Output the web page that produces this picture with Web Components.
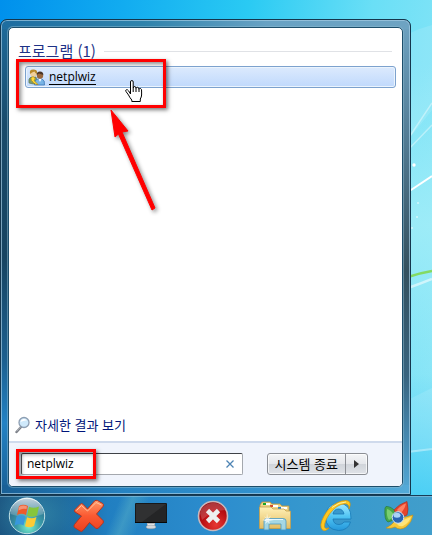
<!DOCTYPE html>
<html lang="ko">
<head>
<meta charset="utf-8">
<title>시작 메뉴</title>
<style>
html,body{height:100%;margin:0}
body{font-family:"Open Sans","Noto Sans CJK KR",sans-serif;font-size:13px;line-height:20px;color:#000;overflow:hidden}
</style>
</head>
<body>
<desktop-screen>
  <start-menu>
    <result-group label="프로그램 (1)">
      <result-item>netplwiz</result-item>
    </result-group>
    <more-results slot="more">자세한 결과 보기</more-results>
    <search-box slot="footer" value="netplwiz"></search-box>
    <shutdown-button slot="footer">시스템 종료</shutdown-button>
  </start-menu>
  <task-bar slot="bar"></task-bar>
</desktop-screen>
<script>
const define = (name, html, setup) => {
  const t = document.createElement('template');
  t.innerHTML = '<style>*{box-sizing:border-box}button{font:inherit;color:inherit;margin:0;padding:0;border:0;background:none}svg{display:block}</style>' + html;
  customElements.define(name, class extends HTMLElement {
    constructor() {
      super();
      this.attachShadow({mode: 'open'}).append(t.content.cloneNode(true));
    }
    connectedCallback() { if (setup) setup(this, this.shadowRoot); }
  });
};

define('desktop-screen', `
<style>
:host{display:flex;flex-direction:column;min-height:100vh;position:relative;
 background:
  radial-gradient(ellipse 420px 160px at 100% 42%,#a4eef8cc,#a4eef800),
  linear-gradient(180deg,#fff0 70%,#2cc4f4aa 93%),
  linear-gradient(97deg,#0090ec 0%,#12acf0 25%,#2acaf3 50%,#6adff6 75%,#8ee6f7 100%)}
.sky{position:absolute;top:0;right:0}
main{flex:1;display:flex;padding:19px 21px 0 0;position:relative}
::slotted(start-menu){flex:1;min-width:0}
</style>
<svg class="sky" width="32" height="495" viewBox="400 0 32 495" fill="none" aria-hidden="true">
 <path d="M408 34Q420 28 432 25V110L408 140Z" fill="#fff" opacity=".12"/>
 <path d="M410 136L432 103M408 150L432 125" stroke="#fff" stroke-width="1.500" opacity=".4"/>
 <path d="M408 192L432 176" stroke="#fff" stroke-width="2"/>
 <path d="M408 277Q420 273 432 271" stroke="#84da62" stroke-width="2.500"/>
 <path d="M408 288Q420 284 432 279" stroke="#fff" stroke-width="2.500" opacity=".55"/>
 <path d="M408 400L432 388V448L408 452Z" fill="#fff" opacity=".12"/>
 <path d="M408 452L432 449" stroke="#fff" stroke-width="2" opacity=".4"/>
 <g fill="#fff"><circle cx="414" cy="165" r="1.700"/><circle cx="418" cy="203" r=".8"/><circle cx="417" cy="217" r=".8"/><circle cx="412" cy="228" r=".8"/></g>
</svg>
<main><slot></slot></main>
<slot name="bar"></slot>`);

define('start-menu', `
<style>
:host{display:flex;position:relative;border:1px solid #14364d;border-radius:7px 7px 0 0;padding:7px;
 box-shadow:inset 0 0 0 1px #a5cde4b0;
 background:
  linear-gradient(90deg,#1e6da0,#2f83ac 35%,#68a2c4 65%,#6ea3c2) top/100% 9px no-repeat,
  linear-gradient(90deg,#195f95,#2683c2 30%,#3494d0 70%,#54aad8) bottom/100% 9px no-repeat,
  linear-gradient(180deg,#1f6c9c,#1a4b6b 22%,#174461 50%,#1c6090 72%,#2382c4 85%,#195f95) left/9px 100% no-repeat,
  linear-gradient(180deg,#6ea3c2,#537c94 25%,#34515f 53%,#38647f 75%,#4689b0 88%,#54aad8) right/9px 100% no-repeat,#2f6f96}
.pane{flex:1;min-width:0;display:flex;flex-direction:column;border:1px solid #1d4e6b;border-radius:5px;background:#fff;box-shadow:0 0 0 1px #8dbbd080;overflow:hidden}
.results{flex:1;padding:12px 6px 0 8px}
.more{padding:0 8px 6px 6px}
footer{display:flex;align-items:center;gap:24px;padding:10px 34px 11px 12px;border-top:2px solid #cfdaec;background:#f0f4fc}
::slotted(search-box){flex:1;min-width:0}
.arrow{position:absolute;left:105px;top:84px;filter:drop-shadow(2px 2px 2px #0007)}
</style>
<div class="pane">
 <div class="results"><slot></slot></div>
 <div class="more"><slot name="more"></slot></div>
 <footer><slot name="footer"></slot></footer>
</div>
<svg class="arrow" width="56" height="112" viewBox="106 104 56 112" aria-hidden="true">
 <path d="M111 110L128 131L122 132L155 208L152 210L118.500 134L115 137Z" fill="#f00" stroke="#f00" stroke-linejoin="round"/>
</svg>`);

define('callout-frame', `
<style>
:host{display:block;position:absolute;box-sizing:border-box;border:3px solid #f00;pointer-events:none;box-shadow:2px 2px 4px #0008,inset 2px 2px 4px #0007}
</style>`);

define('result-group', `
<style>
:host{display:block}
h2{display:flex;align-items:center;gap:8px;margin:0 4px 4px 1px;font-weight:400;font-size:15px;line-height:22px;color:#1e3287;font-family:"Noto Sans CJK KR",sans-serif}
h2::after{content:"";flex:1;border-top:1px solid #e0e2e6}
.items{padding-left:8px}
</style>
<h2><span></span></h2><div class="items"><slot></slot></div>`,
(el, r) => r.querySelector('span').textContent = el.getAttribute('label'));

define('result-item', `
<style>
:host{display:block;position:relative}
a{display:flex;align-items:center;gap:4px;height:22px;padding:0 2px;border:1px solid #7da2ce;border-radius:3px;background:linear-gradient(#dceafd,#c0d9fc);box-shadow:inset 0 0 0 1px #ebf4fd;color:#000;text-decoration:none;font-size:12px;line-height:16px}
span{border-bottom:1px solid #000;line-height:14px}
callout-frame{left:-9px;top:-7px;width:150px;height:49px}
.hand{position:absolute;left:100px;top:14px}
</style>
<a href="#netplwiz">
<svg width="17" height="17" viewBox="0 0 17 17" aria-hidden="true">
 <path d="M1 14Q0 9 3 8H8L10 14Q5 16 1 14Z" fill="#7d9c6c" stroke="#59705a" stroke-width=".6"/>
 <circle cx="5.500" cy="4.500" r="3.300" fill="#efd09c"/><path d="M2 5Q1 0 6 .6Q10 1 9 5Q7 4 6.500 2.500Q4 3 2 5Z" fill="#b98a2c"/>
 <path d="M6.500 16Q6 11 10 10H14Q17 11 16.500 16Z" fill="#78b4e6" stroke="#336fae" stroke-width=".7"/>
 <path d="M10.500 10L12 13L13.500 10Z" fill="#fff"/>
 <circle cx="12" cy="6.500" r="3.200" fill="#99683d"/><path d="M8.700 6Q8.500 2.500 12 2.500Q15.500 2.500 15.300 6Q13 5 11 4.500Z" fill="#4b3527"/>
 <path d="M3 9.500a2 2 0 1 1 3 2l4 4h-2l-1-1H6l-1.500-2Q3 12 3 9.500Z" fill="#ffdc3a" stroke="#a77a09" stroke-width=".6"/>
</svg><span><slot></slot></span></a>
<callout-frame></callout-frame>
<svg class="hand" width="18" height="23" viewBox="0 0 18 23" aria-hidden="true">
 <path d="M5.500 14V2Q5.500.5 6.800.5Q8.200.5 8.200 2V8Q8.500 6.300 9.800 6.500Q11 6.500 11 8.500Q11.500 7 12.700 7.300Q14 7.500 14 9.500Q14.500 8 15.500 8.500Q16.800 9 16.600 11V15Q16.500 17 15.300 19V21.500H6.800V20Q5 18 3.500 15L1 11.500Q.2 10.300 1.200 9.800Q2.500 9.200 3.700 11Z" fill="#fff" stroke="#000"/><path d="M8.200 8V12M11 8.500V12M14 9.500V12" stroke="#000"/>
</svg>`);

define('more-results', `
<style>
:host{display:block}
a{display:flex;align-items:center;gap:4px;color:#00157a;text-decoration:none;font-family:"Noto Sans CJK KR",sans-serif;font-size:13px;line-height:20px}
</style>
<a href="#more"><svg width="16" height="18" viewBox="0 0 16 18" aria-hidden="true">
 <path d="M6 11L1.500 16" stroke="#7b7f87" stroke-width="2.400" stroke-linecap="round"/><path d="M5.500 11L1.500 15.300" stroke="#c4c8ce" stroke-width=".8"/>
 <circle cx="9" cy="6.500" r="5" fill="#cfe9fb" stroke="#8d9eb2" stroke-width="1.300"/><path d="M5.500 6A3.600 3.600 0 0 1 12 4.500Q9 4 5.500 6Z" fill="#fff"/>
</svg><slot></slot></a>`);

define('search-box', `
<style>
:host{display:block;position:relative}
.box{display:flex;align-items:center;height:22px;border:1px solid #a4a8ae;border-top-color:#3f4247;border-left-color:#55585d;border-radius:2px;background:#fff;padding:0 6px 0 5px}
input{flex:1;min-width:0;border:0;outline:0;padding:0;background:none;font:12px/16px "Open Sans",sans-serif;color:#000}
button{width:12px;height:12px}
callout-frame{left:-5px;top:-4px;width:80px;height:30px}
</style>
<div class="box"><input type="text" aria-label="프로그램 및 파일 검색"><button aria-label="지우기"><svg width="12" height="12" viewBox="0 0 12 12"><path d="M2.500 2.500L9.500 9.500M9.500 2.500L2.500 9.500" stroke="#4c83b3" stroke-width="1.300"/></svg></button></div>
<callout-frame></callout-frame>`,
(el, r) => r.querySelector('input').value = el.getAttribute('value'));

define('shutdown-button', `
<style>
:host{display:flex;height:22px;border:1px solid #8b8e94;border-radius:3px;background:linear-gradient(#f4f5f7,#e5e7eb 48%,#d0d4da 52%,#e0e3e8);box-shadow:inset 0 0 0 1px #ffffffb0;box-sizing:border-box}
button{font:13px/18px "Noto Sans CJK KR",sans-serif;white-space:nowrap}
.main{padding:0 7px}
.opts{width:22px;border-left:1px solid #8b8e94;display:grid;place-items:center}
</style>
<button class="main"><slot></slot></button><button class="opts" aria-label="옵션"><svg width="5" height="8" viewBox="0 0 5 8"><path d="M0 0L5 4L0 8Z" fill="#333"/></svg></button>`);

define('task-bar', `
<style>
:host{display:block;position:relative;border-top:1px solid #173c57;box-shadow:inset 0 1px #9cc8e088;
 background:radial-gradient(ellipse 45px 36px at 36px 45%,#51b8c060,#0000),
 linear-gradient(112deg,#fff0 112px,#70c6c855 124px,#fff0 140px),
 linear-gradient(90deg,#1b5581,#1b6499 14%,#217fc1 25%,#2c8dce 50%,#3597ce 70%,#419ecb)}
nav{display:flex;gap:24px;height:39px;padding:0 8px;align-items:center}
button{width:38px;height:38px;display:grid;place-items:center;flex:none}
</style>
<nav aria-label="작업 표시줄">
<button aria-label="시작"><svg width="38" height="38" viewBox="0 0 38 38">
 <defs><radialGradient id="o" cx=".55" cy=".8" r=".75"><stop offset="0" stop-color="#7af0cc"/><stop offset=".45" stop-color="#3a9ba8"/><stop offset="1" stop-color="#2a6488"/></radialGradient>
 <linearGradient id="gl" x2="0" y2="1"><stop stop-color="#fff" stop-opacity=".75"/><stop offset="1" stop-color="#fff" stop-opacity=".1"/></linearGradient></defs>
 <circle cx="19" cy="19" r="17.700" fill="url(#o)" stroke="#bfe0e4"/>
 <path d="M2.500 17A16.500 16.500 0 0 1 35.500 17Q19 24 2.500 17Z" fill="url(#gl)"/>
 <path d="M11 9Q15 6.500 20 9L18 18Q13.500 15.500 9 18Z" fill="#ee5a2a"/>
 <path d="M21 9.700Q25.500 12 31 9.500L29 18.500Q24 21 19.200 18.700Z" fill="#86c63c"/>
 <path d="M8.500 19.500Q13 17 17.500 19.500L15.500 28.500Q11.500 26 6.500 28.500Z" fill="#3898dc"/>
 <path d="M19 20.200Q23.500 22.500 28.500 20L26 29Q21.500 31.500 17 29.200Z" fill="#fccb35"/>
 <path d="M11 10Q15 7.500 19 9.500L18.500 12Q14 11 10.500 13.500Z" fill="#fff" opacity=".35"/>
</svg></button>
<button aria-label="닫기"><svg width="32" height="34" viewBox="0 0 32 34">
 <defs><linearGradient id="x" x2="0" y2="1"><stop stop-color="#ff9a68"/><stop offset=".5" stop-color="#fb5a32"/><stop offset="1" stop-color="#e9401f"/></linearGradient></defs>
 <path d="M2 10.500L7.500 5Q8.700 4 10 5.200L14.500 10L21.500 2Q23 .8 24.500 1.500L29.700 4.500Q31 5.500 30.200 7.200L23.500 15L30 21.500Q31 23 29.700 24.500L25.500 29Q24 30.200 22.500 29L16.500 23.500L10 31.500Q8.700 33 7 32L1.500 28.500Q.3 27.300 1.500 25.500L8.500 17L2 13Q.8 12 2 10.500Z" fill="url(#x)" stroke="#b8321b"/>
 <path d="M3.500 11.500L8.500 6.500L14.500 12L23 3.500L28.500 6" fill="none" stroke="#ffc2a0"/>
</svg></button>
<button aria-label="모니터"><svg width="34" height="28" viewBox="0 0 34 28">
 <path d="M13 21H21V24H13Z" fill="#b4b8bc"/><path d="M14 22H20V25H14Z" fill="#e6e8ea"/><ellipse cx="17" cy="25" rx="5" ry="1.800" fill="#d4d7da" stroke="#8b9298" stroke-width=".5"/>
 <rect x="1" y="1" width="32" height="20" rx="1" fill="#171819"/><rect x="2" y="2" width="30" height="18" fill="#242526"/><path d="M2 2H32L8 20H2Z" fill="#303132"/><path d="M1 20.500H33" stroke="#070707"/>
</svg></button>
<button aria-label="중지"><svg width="32" height="32" viewBox="0 0 32 32">
 <defs><radialGradient id="r" cx=".6" cy=".8" r=".8"><stop stop-color="#e73833"/><stop offset=".6" stop-color="#b90e13"/><stop offset="1" stop-color="#930a10"/></radialGradient></defs>
 <circle cx="16" cy="16" r="14.500" fill="url(#r)" stroke="#c9b7bb" stroke-width="1.600"/>
 <path d="M3 13A13.500 13.500 0 0 1 28 10Q16 10 5 20Z" fill="#fff" opacity=".18"/>
 <path d="M10.500 10.500L21.500 21.500M21.500 10.500L10.500 21.500" stroke="#edf0f0" stroke-width="4.600"/>
</svg></button>
<button aria-label="탐색기"><svg width="34" height="32" viewBox="0 0 34 32">
 <defs><linearGradient id="f" x2="0" y2="1"><stop stop-color="#fff1b8"/><stop offset="1" stop-color="#e3bd62"/></linearGradient></defs>
 <path d="M2 5L4 2H12L14 4H22L24 6H31V28H2Z" fill="#eed588" stroke="#b79545" stroke-width=".8"/>
 <path d="M5 3H12V5H5Z" fill="#fff"/><path d="M5 3H8V5H5Z" fill="#1aa528"/><path d="M12 5H20V7H12Z" fill="#fff"/><path d="M12 5H15V7H12Z" fill="#d24a2c"/><path d="M20 7H29V9H20Z" fill="#fff"/><path d="M20 7H23V9H20Z" fill="#2784d0"/>
 <path d="M1.500 7H13L15 9H26L28 11H32.500V28.500H1.500Z" fill="url(#f)" stroke="#c39f4e" stroke-width=".8"/>
 <path d="M6 30V21Q6 18.500 9 18.500H25Q28 18.500 28 21V30H23V24H11V30Z" fill="#9bd8f2" fill-opacity=".88" stroke="#4b9ac2" stroke-width=".8"/>
 <path d="M7 21Q7 19.500 9 19.500H25" fill="none" stroke="#e5f8ff"/>
 <path d="M9 13L10 18L13 15.500L11 19L16 20L11 21L12 24L9.500 22L7 24L8 21L4 20L8 19L6 16L8.500 18Z" fill="#fff" opacity=".65"/>
</svg></button>
<button aria-label="인터넷"><svg width="36" height="34" viewBox="0 0 36 34">
 <defs><linearGradient id="e" x2="0" y2="1"><stop stop-color="#a6ebff"/><stop offset=".5" stop-color="#4fc4f3"/><stop offset="1" stop-color="#2497db"/></linearGradient></defs>
 <path d="M32 20H14Q14.500 25.500 20 25.500Q23.500 25.500 25 23H31.500Q29 31.500 19.500 31.500Q7 30.500 6.500 18Q7 5.500 19 4Q32.500 4.500 32 20ZM14 15H25Q24 10 19.500 10Q15 10 14 15Z" fill="url(#e)" stroke="#187ab8" stroke-width=".8"/>
 <path d="M10 10Q18 1.500 27 1.500Q33.500 2 30 10Q30.500 5 26 4.800Q18 5 10.500 15Q5 23 5.500 28Q6 30.500 10 29Q6.500 33 3.500 31Q-.5 27 5 17Q7 13 10 10Z" fill="#ffc71f" stroke="#d69408" stroke-width=".7"/>
 <path d="M13 8.500Q20 3 27 3" fill="none" stroke="#fff0a0"/>
</svg></button>
<button aria-label="브라우저"><svg width="32" height="32" viewBox="0 0 32 32">
 <path d="M2 8Q1 20 5 22L14 19L13 12Q8 6 3 6.500Z" fill="#45a64b" stroke="#247531" stroke-width=".6"/><path d="M4 9Q8 10 12 16L6 20Q3 16 4 9Z" fill="#79ce70"/>
 <path d="M11 10Q16 4 24 1.500Q26 10 24 15L19 17L13 13Z" fill="#e5452c" stroke="#a92819" stroke-width=".6"/><path d="M14 10Q18 5 23 3.500Q22 9 17 14Z" fill="#ff8164"/>
 <path d="M19 18L30 15Q29 22 23 27Q17 31 12 27Q8 29 3 28Q9 25 12 21Z" fill="#f6c739" stroke="#bd8b16" stroke-width=".6"/><path d="M20 20L28 17Q26 23 20 26Q16 27 14 24Z" fill="#ffe579"/>
 <circle cx="15" cy="17.500" r="5.800" fill="#2865b5" stroke="#d2e4f1"/><ellipse cx="14" cy="15.300" rx="3.500" ry="2.500" fill="#a9d3f7"/>
</svg></button>
</nav>`);
</script>
</body>
</html>
